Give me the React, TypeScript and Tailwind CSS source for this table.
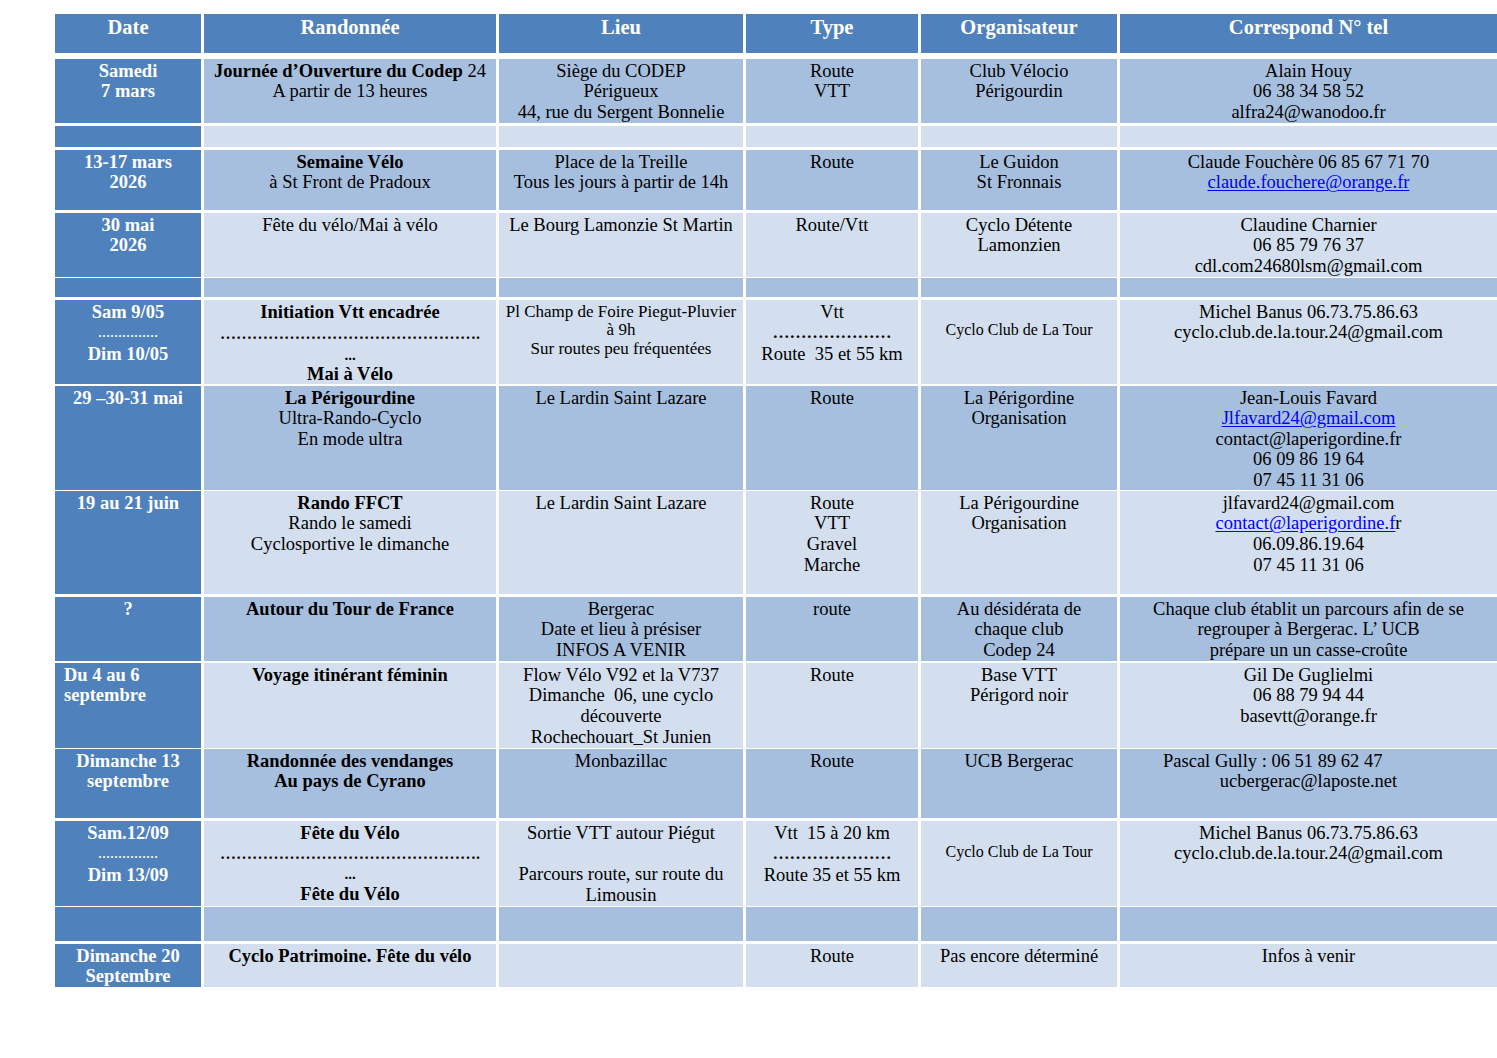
import type { ReactNode } from 'react';

const grid = 'grid grid-cols-[146px_292px_244px_172px_196px_377px] gap-x-[3px]';

// cell shades taken from the table
const DARK = 'bg-[#4f81bd]';
const MID = 'bg-[#a7bfde]';
const LIGHT = 'bg-[#d3dfee]';

type Row = {
  h: string;
  shade: 'mid' | 'light';
  date?: ReactNode;
  cells?: ReactNode[];
};

const L = ({ children, b, cls = '' }: { children?: ReactNode; b?: boolean; cls?: string }) => (
  <div className={`whitespace-pre ${b ? 'font-bold' : ''} ${cls}`}>{children ?? '\u00a0'}</div>
);

const Link = ({ children }: { children: ReactNode }) => (
  <span className="text-[#0000ff] underline underline-offset-2">{children}</span>
);

const Dots = ({ n, size }: { n: number; size: string }) => (
  <div className={`${size} leading-[22px] font-bold`}>{'…'.repeat(n)}</div>
);

const rows: Row[] = [
  {
    h: 'h-[64px]',
    shade: 'mid',
    date: (
      <>
        <L>Samedi</L>
        <L>7 mars</L>
      </>
    ),
    cells: [
      <>
        <L>
          <b>Journée d’Ouverture du Codep</b> 24
        </L>
        <L>A partir de 13 heures</L>
      </>,
      <>
        <L>Siège du CODEP</L>
        <L>Périgueux</L>
        <L>44, rue du Sergent Bonnelie</L>
      </>,
      <>
        <L>Route</L>
        <L>VTT</L>
      </>,
      <>
        <L>Club Vélocio</L>
        <L>Périgourdin</L>
      </>,
      <>
        <L>Alain Houy</L>
        <L>06 38 34 58 52</L>
        <L>alfra24@wanodoo.fr</L>
      </>,
    ],
  },
  { h: 'h-[21px]', shade: 'light' },
  {
    h: 'h-[60px]',
    shade: 'mid',
    date: (
      <>
        <L>13-17 mars</L>
        <L>2026</L>
      </>
    ),
    cells: [
      <>
        <L b>Semaine Vélo</L>
        <L>à St Front de Pradoux</L>
      </>,
      <>
        <L>Place de la Treille</L>
        <L>Tous les jours à partir de 14h</L>
      </>,
      <L>Route</L>,
      <>
        <L>Le Guidon</L>
        <L>St Fronnais</L>
      </>,
      <>
        <L>Claude Fouchère 06 85 67 71 70</L>
        <L>
          <Link>claude.fouchere@orange.fr</Link>
        </L>
      </>,
    ],
  },
  {
    h: 'h-[62px]',
    shade: 'light',
    date: (
      <>
        <L>30 mai</L>
        <L>2026</L>
      </>
    ),
    cells: [
      <L>Fête du vélo/Mai à vélo</L>,
      <L>Le Bourg Lamonzie St Martin</L>,
      <L>Route/Vtt</L>,
      <>
        <L>Cyclo Détente</L>
        <L>Lamonzien</L>
      </>,
      <>
        <L>Claudine Charnier</L>
        <L>06 85 79 76 37</L>
        <L>cdl.com24680lsm@gmail.com</L>
      </>,
    ],
  },
  { h: 'h-[19px]', shade: 'mid' },
  {
    h: 'h-[83px]',
    shade: 'light',
    date: (
      <>
        <L>Sam 9/05</L>
        <Dots n={5} size="text-[12px]" />
        <L>Dim 10/05</L>
      </>
    ),
    cells: [
      <>
        <L b>Initiation Vtt encadrée</L>
        <div className="text-[16px] leading-[23px] font-bold">{'…'.repeat(16) + '.'}</div>
        <L cls="leading-[20px] font-bold text-[15px]">...</L>
        <L b cls="leading-[19px]">Mai à Vélo</L>
      </>,
      <div className="text-[17px] leading-[18.5px] pt-[1px]">
        <L>Pl Champ de Foire Piegut-Pluvier</L>
        <L>à 9h</L>
        <L>Sur routes peu fréquentées</L>
      </div>,
      <>
        <L>Vtt</L>
        <Dots n={7} size="text-[17px]" />
        <L>Route  35 et 55 km</L>
      </>,
      <div className="text-[16px] pt-[18px]">
        <L>Cyclo Club de La Tour</L>
      </div>,
      <>
        <L>Michel Banus 06.73.75.86.63</L>
        <L>cyclo.club.de.la.tour.24@gmail.com</L>
      </>,
    ],
  },
  {
    h: 'h-[102px]',
    shade: 'mid',
    date: <L>29 –30-31 mai</L>,
    cells: [
      <>
        <L b>La Périgourdine</L>
        <L>Ultra-Rando-Cyclo</L>
        <L>En mode ultra</L>
      </>,
      <L>Le Lardin Saint Lazare</L>,
      <L>Route</L>,
      <>
        <L>La Périgordine</L>
        <L>Organisation</L>
      </>,
      <div className="leading-[20.6px]">
        <L>Jean-Louis Favard</L>
        <L>
          <Link>Jlfavard24@gmail.com</Link>
        </L>
        <L>contact@laperigordine.fr</L>
        <L>06 09 86 19 64</L>
        <L>07 45 11 31 06</L>
      </div>,
    ],
  },
  {
    h: 'h-[103px]',
    shade: 'light',
    date: <L>19 au 21 juin</L>,
    cells: [
      <>
        <L b>Rando FFCT</L>
        <L>Rando le samedi</L>
        <L>Cyclosportive le dimanche</L>
      </>,
      <L>Le Lardin Saint Lazare</L>,
      <>
        <L>Route</L>
        <L>VTT</L>
        <L>Gravel</L>
        <L>Marche</L>
      </>,
      <>
        <L>La Périgourdine</L>
        <L>Organisation</L>
      </>,
      <>
        <L>jlfavard24@gmail.com</L>
        <L>
          <Link>contact@laperigordine.f</Link>r
        </L>
        <L>06.09.86.19.64</L>
        <L>07 45 11 31 06</L>
      </>,
    ],
  },
  {
    h: 'h-[63px]',
    shade: 'mid',
    date: <L>?</L>,
    cells: [
      <L b>Autour du Tour de France</L>,
      <>
        <L>Bergerac</L>
        <L>Date et lieu à présiser</L>
        <L>INFOS A VENIR</L>
      </>,
      <L>route</L>,
      <>
        <L>Au désidérata de</L>
        <L>chaque club</L>
        <L>Codep 24</L>
      </>,
      <>
        <L>Chaque club établit un parcours afin de se</L>
        <L>regrouper à Bergerac. L’ UCB</L>
        <L>prépare un un casse-croûte</L>
      </>,
    ],
  },
  {
    h: 'h-[83px]',
    shade: 'light',
    date: (
      <div className="text-left pl-[9px]">
        <L>Du 4 au 6</L>
        <L>septembre</L>
      </div>
    ),
    cells: [
      <L b>Voyage itinérant féminin</L>,
      <>
        <L>Flow Vélo V92 et la V737</L>
        <L>Dimanche  06, une cyclo</L>
        <L>découverte</L>
        <L>Rochechouart_St Junien</L>
      </>,
      <L>Route</L>,
      <>
        <L>Base VTT</L>
        <L>Périgord noir</L>
      </>,
      <>
        <L>Gil De Guglielmi</L>
        <L>06 88 79 94 44</L>
        <L>basevtt@orange.fr</L>
      </>,
    ],
  },
  {
    h: 'h-[69px]',
    shade: 'mid',
    date: (
      <>
        <L>Dimanche 13</L>
        <L>septembre</L>
      </>
    ),
    cells: [
      <>
        <L b>Randonnée des vendanges</L>
        <L b>Au pays de Cyrano</L>
      </>,
      <L>Monbazillac</L>,
      <L>Route</L>,
      <L>UCB Bergerac</L>,
      <>
        <L cls="text-left pl-[43px]">Pascal Gully : 06 51 89 62 47</L>
        <L>ucbergerac@laposte.net</L>
      </>,
    ],
  },
  {
    h: 'h-[83px]',
    shade: 'light',
    date: (
      <>
        <L>Sam.12/09</L>
        <Dots n={5} size="text-[12px]" />
        <L>Dim 13/09</L>
      </>
    ),
    cells: [
      <>
        <L b>Fête du Vélo</L>
        <div className="text-[16px] leading-[22px] font-bold">{'…'.repeat(16) + '.'}</div>
        <L cls="leading-[19px] font-bold text-[15px]">...</L>
        <L b cls="leading-[21px]">Fête du Vélo</L>
      </>,
      <>
        <L>Sortie VTT autour Piégut</L>
        <L />
        <L>Parcours route, sur route du</L>
        <L>Limousin</L>
      </>,
      <>
        <L>Vtt  15 à 20 km</L>
        <Dots n={7} size="text-[17px]" />
        <L>Route 35 et 55 km</L>
      </>,
      <div className="text-[16px] pt-[19px]">
        <L>Cyclo Club de La Tour</L>
      </div>,
      <>
        <L>Michel Banus 06.73.75.86.63</L>
        <L>cyclo.club.de.la.tour.24@gmail.com</L>
      </>,
    ],
  },
  { h: 'h-[34px]', shade: 'mid' },
  {
    h: 'h-[42px]',
    shade: 'light',
    date: (
      <>
        <L>Dimanche 20</L>
        <L>Septembre</L>
      </>
    ),
    cells: [
      <L b>Cyclo Patrimoine. Fête du vélo</L>,
      <L />,
      <L>Route</L>,
      <L>Pas encore déterminé</L>,
      <L>Infos à venir</L>,
    ],
  },
];

const headers = ['Date', 'Randonnée', 'Lieu', 'Type', 'Organisateur', 'Correspond N° tel'];

export default function App() {
  return (
    <div
      className="w-[1497px] h-[1058px] overflow-hidden bg-white pt-[14px] pl-[55px] text-black"
      style={{ fontFamily: '"Liberation Serif", "Times New Roman", serif' }}
    >
      <div className={`${grid} h-[39px]`}>
        {headers.map((h) => (
          <div key={h} className={`${DARK} text-white font-bold text-[20.5px] leading-[24px] pt-[1px] text-center`}>
            {h}
          </div>
        ))}
      </div>

      <div className="mt-[6px] flex flex-col gap-[3px]">
        {rows.map((r, i) => {
          const bg = r.shade === 'mid' ? MID : LIGHT;
          return (
            <div key={i} className={`${grid} ${r.h}`}>
              <div className={`${DARK} text-white font-bold text-[18.5px] leading-[20.8px] pt-[1.5px] text-center`}>
                {r.date}
              </div>
              {[0, 1, 2, 3, 4].map((c) => (
                <div key={c} className={`${bg} text-[18.5px] leading-[20.8px] pt-[1.5px] text-center`}>
                  {r.cells?.[c]}
                </div>
              ))}
            </div>
          );
        })}
      </div>
    </div>
  );
}
